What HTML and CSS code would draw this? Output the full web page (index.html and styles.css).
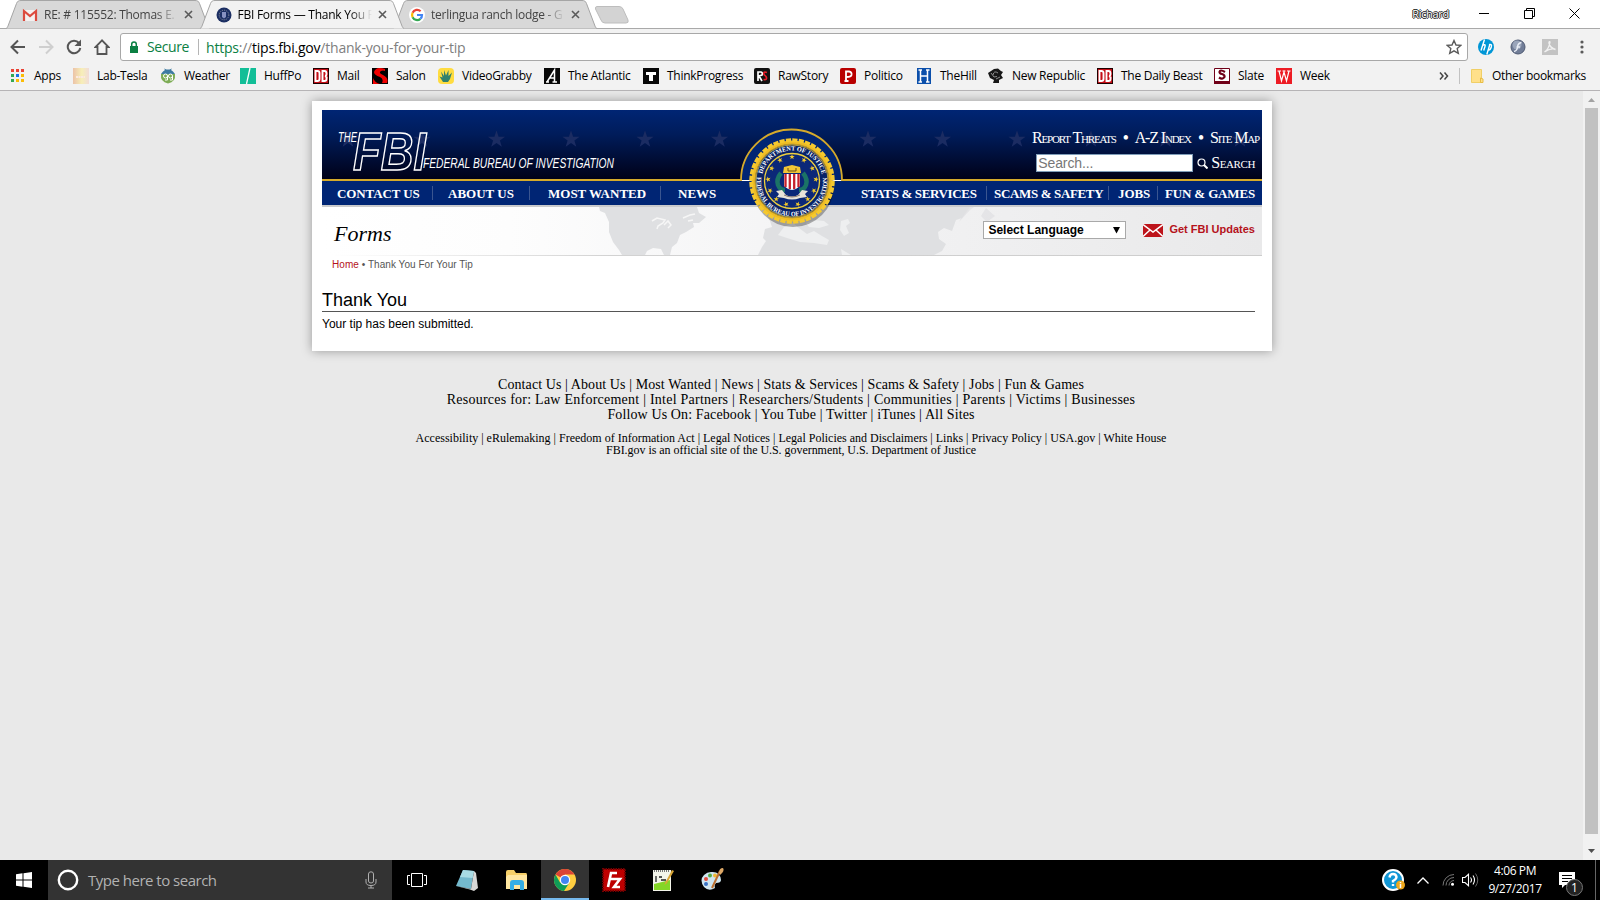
FILE: index.html
```html
<!DOCTYPE html>
<html lang="en">
<head>
    <meta charset="UTF-8">
    <title>FBI Forms — Thank You For Your Tip</title>
    <link rel="stylesheet" href="styles.css">
</head>
<body>
    <!-- shared shapes -->
    <svg class="defs" width="0" height="0">
        <defs>
            <path id="tab-shape" d="M0 28.500C1 28.300 1.500 27 2 26L10.500 3.500C11.500 1.200 12.500 .5 15 .5H189C191.500 .5 192.500 1.200 193.500 3.500L202 26C202.500 27 203 28.300 204 28.500"/>
            <path id="star" d="M0-9L2.100-2.800H8.600L3.400 1.100L5.300 7.300L0 3.500L-5.300 7.300L-3.400 1.100L-8.600-2.800H-2.100Z"/>
            <path id="cross" d="M1 1L8 8M8 1L1 8"/>
        </defs>
    </svg>

    <!-- Tab strip -->
    <div class="tab-strip">
        <div class="tab">
            <svg class="tab-bg" width="204" height="29"><use href="#tab-shape" fill="#d8d8d8" stroke="#a5a5a5"/></svg>
            <svg class="tab-icon" width="16" height="16"><path d="M1 3H15V14H1Z" fill="#f4f1f0"/><path d="M2 14V4L8 9L14 4V14" fill="none" stroke="#dc4b3e" stroke-width="2.200"/></svg>
            <span class="tab-title">RE: # 115552: Thomas E. C</span>
            <svg class="tab-close" width="9" height="9"><use href="#cross"/></svg>
        </div>
        <div class="tab active">
            <svg class="tab-bg" width="204" height="29"><use href="#tab-shape" fill="#f2f2f2" stroke="#a5a5a5"/></svg>
            <svg class="tab-icon" width="16" height="16"><circle cx="8" cy="8" r="7.500" fill="#1c2f63"/><circle cx="8" cy="8" r="4.800" fill="none" stroke="#8f93a0" stroke-width="1" stroke-dasharray="1 1"/><path d="M6 5H10V10L8 11.500L6 10Z" fill="#8892c0"/></svg>
            <span class="tab-title">FBI Forms — Thank You F</span>
            <svg class="tab-close" width="9" height="9"><use href="#cross"/></svg>
        </div>
        <div class="tab">
            <svg class="tab-bg" width="204" height="29"><use href="#tab-shape" fill="#d8d8d8" stroke="#a5a5a5"/></svg>
            <svg class="tab-icon" width="16" height="16"><circle cx="8" cy="8" r="8" fill="#fff"/><g fill="none" stroke-width="2.200"><path d="M11.600 4.200A5 5 0 0 0 3.600 5.800" stroke="#ea4335"/><path d="M3.600 5.800A5 5 0 0 0 3.600 10.200" stroke="#fbbc05"/><path d="M3.600 10.200A5 5 0 0 0 11.400 11.800" stroke="#34a853"/><path d="M11.400 11.800A5 5 0 0 0 13 8H8" stroke="#4285f4"/></g></svg>
            <span class="tab-title">terlingua ranch lodge - G</span>
            <svg class="tab-close" width="9" height="9"><use href="#cross"/></svg>
        </div>
        <svg class="new-tab" width="36" height="18"><path d="M3 .5H25Q28 .5 29 3L34 14Q35 17 32 17H11Q8 17 7 14L1.500 3Q1 .5 3 .5Z" fill="#d3d3d3" stroke="#bdbdbd"/></svg>
        <div class="window-buttons">
            <span class="profile">Richard</span>
            <svg width="11" height="11"><path d="M0 5.500H10" stroke="#000"/></svg>
            <svg width="11" height="11"><path d="M.5 2.500H8.500V10.500H.5ZM2.500 2.500V.5H10.500V8.500H8.500" fill="none" stroke="#000"/></svg>
            <svg width="11" height="11"><path d="M.5 .5L10.500 10.500M10.500 .5L.5 10.500" stroke="#000"/></svg>
        </div>
    </div>

    <!-- Toolbar -->
    <div class="toolbar">
        <svg width="16" height="16"><path d="M15 8H2M8 1.500L1.500 8L8 14.500" fill="none" stroke="#555" stroke-width="2"/></svg>
        <svg width="16" height="16"><path d="M1 8H14M8 1.500L14.500 8L8 14.500" fill="none" stroke="#cfcfcf" stroke-width="2"/></svg>
        <svg width="16" height="16"><path d="M13 4A6.300 6.300 0 1 0 14.300 9" fill="none" stroke="#555" stroke-width="2"/><path d="M15 .5V7H8.500Z" fill="#555"/></svg>
        <svg width="16" height="16"><path d="M8 1.300L1.500 8H3.500V15H12.500V8H14.500Z" fill="none" stroke="#555" stroke-width="1.800"/></svg>
        <div class="omnibox">
            <svg width="10" height="12"><path d="M1 5H9V12H1Z" fill="#0b8043"/><path d="M2.700 5V3.200A2.300 2.300 0 0 1 7.300 3.200V5" fill="none" stroke="#0b8043" stroke-width="1.500"/></svg>
            <span class="secure">Secure</span>
            <span class="url"><span class="green">https</span>://<span class="host">tips.fbi.gov</span>/thank-you-for-your-tip</span>
            <svg class="bookmark-star" width="16" height="16"><path d="M8 1.500L10 6L14.800 6.400L11.200 9.600L12.300 14.300L8 11.800L3.700 14.300L4.800 9.600L1.200 6.400L6 6Z" fill="none" stroke="#5a5a5a" stroke-width="1.400"/></svg>
        </div>
        <svg width="16" height="16"><circle cx="8" cy="8" r="8" fill="#0096d6"/><path d="M6.500 .5L3 11.500M4.300 6.500Q8 4.500 7 7.500L5.700 11.500M12 5L8.800 15.500M11 5.700Q14.300 4.500 13.300 8Q12.300 11.500 10 11" fill="none" stroke="#fff" stroke-width="1.400"/></svg>
        <svg width="16" height="16"><circle cx="8" cy="8" r="7" fill="#717d97" stroke="#4f5a73"/><circle cx="7" cy="6" r="4.500" fill="#9aa5ba"/><path d="M11.500 3.500Q8 4 7.500 8T4 12.500M6.500 8H10" fill="none" stroke="#e9edf5" stroke-width="1.500"/></svg>
        <svg width="16" height="16"><path d="M0 0H16V16H0Z" fill="#c3c3c3"/><path d="M2.500 13Q7 10 8 3Q7 2 7 4Q8 9 13.500 10.500Q9 8.500 2.500 13" fill="none" stroke="#f1f1f1" stroke-width="1.400"/></svg>
        <svg class="menu-dots" width="16" height="16"><circle cx="8" cy="3" r="1.600" fill="#5a5a5a"/><circle cx="8" cy="8" r="1.600" fill="#5a5a5a"/><circle cx="8" cy="13" r="1.600" fill="#5a5a5a"/></svg>
    </div>

    <!-- Bookmarks bar -->
    <div class="bookmarks">
        <a><svg width="16" height="16"><g fill="#ea4335"><path d="M1 1H4V4H1ZM6 1H9V4H6ZM11 1H14V4H11Z"/></g><path d="M1 6H4V9H1ZM1 11H4V14H1Z" fill="#34a853"/><path d="M6 6H9V9H6Z" fill="#1a73e8"/><path d="M11 6H14V9H11ZM6 11H9V14H6ZM11 11H14V14H11Z" fill="#fbbc05"/></svg>Apps</a>
        <a><svg width="16" height="16"><defs><linearGradient id="lab"><stop offset="0" stop-color="#ecc3a8"/><stop offset=".55" stop-color="#f7efb8"/><stop offset="1" stop-color="#f1dcd8"/></linearGradient></defs><path d="M0 0H16V16H0Z" fill="url(#lab)"/><path d="M3 9H12" stroke="#fbe9e0" stroke-width="2" stroke-dasharray="2 .5"/></svg>Lab-Tesla</a>
        <a><svg width="16" height="16"><path d="M1 6Q3 3 5 2L4 .5L6.500 1.500H9.500L12 .5L11 2Q13 3 15 6Z" fill="#3e7ba1"/><path d="M1 6H15Q16 14 8 15.500Q0 14 1 6Z" fill="#7dac55"/><g fill="none" stroke="#fff"><circle cx="5.500" cy="8" r="2"/><circle cx="10.500" cy="8" r="2"/><path d="M7.500 8V12H5M12.500 8V12H10"/></g></svg>Weather</a>
        <a><svg width="16" height="16"><path d="M0 0H16V16H0Z" fill="#12be97"/><path d="M10 0L6.500 16" stroke="#fff" stroke-width="1.300"/></svg>HuffPo</a>
        <a><svg width="16" height="16"><path d="M0 0H16V16H0Z" fill="#1d0000"/><path d="M1 1H15V15H1Z" fill="#c40d16"/><path d="M2.500 3H4.500Q6.500 3 6.500 5V11Q6.500 13 4.500 13H2.500ZM9.500 3H11.500Q13.500 3 13.500 5.500T12 8Q14 8.500 13.500 11Q13.500 13 11.500 13H9.500Z" fill="none" stroke="#fff" stroke-width="1.900"/></svg>Mail</a>
        <a><svg width="16" height="16"><path d="M0 0H16V16H0Z" fill="#000"/><path d="M13 1Q4-2 2 4Q2 7 8 9Q12 11 10 15H15Q17 10 11 7Q6 5 9 3Q11 2 13 3Z" fill="#f00000"/><path d="M1 10V16H8Q3 15 1 10" fill="#f00000"/></svg>Salon</a>
        <a><svg width="16" height="16"><rect width="16" height="16" rx="4" fill="#ffdc40"/><path d="M5 14L1.500 8.500L4.500 9.500L3 3.500L6 8L6 2L8 7.500L10.500 2L10.500 8L14 4.500L12 11L10 14Z" fill="#32816d"/></svg>VideoGrabby</a>
        <a><svg width="16" height="16"><path d="M0 0H16V16H0Z" fill="#080808"/><path d="M3 14L10.500 2V14M6 10H10.500M2 14H5M8.500 14H13" fill="none" stroke="#fff" stroke-width="1.500"/></svg>The Atlantic</a>
        <a><svg width="16" height="16"><path d="M0 0H16V16H0Z" fill="#080808"/><path d="M3 4H13V7H10V13H6V7H3Z" fill="#fff"/></svg>ThinkProgress</a>
        <a><svg width="16" height="16"><rect width="16" height="16" rx="2" fill="#111"/><path d="M4 13V4H7Q9 4.500 8 7L5 8L8 13" fill="none" stroke="#fff" stroke-width="1.700"/><path d="M13 4.500Q9 3 10 6.500L12 8.500Q14 12 9.500 11.500" fill="none" stroke="#e71c27" stroke-width="1.700"/></svg>RawStory</a>
        <a><svg width="16" height="16"><rect width="16" height="16" rx="2" fill="#b90000"/><path d="M6 13V3.500H9Q12 4 11.500 7Q11 9 6.500 9M4.500 13H8.500" fill="none" stroke="#fff" stroke-width="1.800"/></svg>Politico</a>
        <a><svg width="16" height="16"><path d="M1 0H15V16H1Z" fill="#0b4fab"/><path d="M4.500 2V14M11.500 2V14M4.500 8H11.500M2.500 2H6M10 2H13.500M2.500 14H6M10 14H13.500" stroke="#fff" stroke-width="1.500"/></svg>TheHill</a>
        <a><svg width="16" height="16"><path d="M3 3L6 1L10 .5L13 3L15 4L13 7L15 10L11 12L11 15H5L6 12L2 10L0 5Z" fill="#171717"/><path d="M5 7Q6 2 10 5M3 5L6 9L9 8.500M8 11L12 9" fill="none" stroke="#aaa" stroke-width=".8"/></svg>New Republic</a>
        <a><svg width="16" height="16"><path d="M0 0H16V16H0Z" fill="#1d0000"/><path d="M1 1H15V15H1Z" fill="#c40d16"/><path d="M2.500 3H4.500Q6.500 3 6.500 5V11Q6.500 13 4.500 13H2.500ZM9.500 3H11.500Q13.500 3 13.500 5.500T12 8Q14 8.500 13.500 11Q13.500 13 11.500 13H9.500Z" fill="none" stroke="#fff" stroke-width="1.900"/></svg>The Daily Beast</a>
        <a><svg width="16" height="16"><path d="M.5 .5H15.500V15.500H.5Z" fill="#fff" stroke="#700018"/><path d="M0 13H16V16H0Z" fill="#700018"/><path d="M11 4Q6 1 5.500 4Q5.500 5.500 8 6Q11 7 10.500 9Q8.500 12 5 9.500" fill="none" stroke="#700018" stroke-width="2.200"/></svg>Slate</a>
        <a><svg width="16" height="16"><path d="M0 0H16V16H0Z" fill="#ed1c24"/><path d="M3 3L5.500 13L8 4L10.500 13L13 3M1.500 3H5M6.500 3H9.500M11 3H14.500" fill="none" stroke="#fff" stroke-width="1.200"/></svg>Week</a>
        <svg class="more" width="10" height="8"><path d="M1 .5L4 4L1 7.500M5.500 .5L8.500 4L5.500 7.500" fill="none" stroke="#444" stroke-width="1.500"/></svg>
        <a class="other"><svg width="13" height="14"><path d="M.5 .5H10.500V13.500H.5Z" fill="#ffe08a" stroke="#f0cf66"/><path d="M9.500 9V13.500H12V10Z" fill="#ffe08a" stroke="#e8bd45"/></svg>Other bookmarks</a>
    </div>

    <!-- Page -->
    <div class="viewport">
        <div class="page">
            <div class="card">
                <div class="banner">
                    <svg class="banner-art" width="940" height="146">
                        <defs>
                            <linearGradient id="sky" x2="0" y2="1"><stop offset="0" stop-color="#002574"/><stop offset=".35" stop-color="#001c5a"/><stop offset="1" stop-color="#000016"/></linearGradient>
                            <linearGradient id="sub"><stop offset="0" stop-color="#fff"/><stop offset=".2" stop-color="#fdfdfd"/><stop offset=".5" stop-color="#f4f4f5"/><stop offset="1" stop-color="#e9e9ea"/></linearGradient>
                            <linearGradient id="rule" gradientUnits="userSpaceOnUse" x1="10" x2="940"><stop offset="0" stop-color="#fff"/><stop offset=".3" stop-color="#d2d2d2"/><stop offset="1" stop-color="#cdcdcd"/></linearGradient>
                        </defs>
                        <path d="M0 0H940V70H0Z" fill="url(#sky)"/>
                        <g fill="#1b2c62">
                            <use href="#star" x="26" y="29.500"/><use href="#star" x="100" y="29.500"/><use href="#star" x="174.500" y="29.500"/><use href="#star" x="249" y="29.500"/><use href="#star" x="323" y="29.500"/><use href="#star" x="397.500" y="29.500"/><use href="#star" x="546" y="29.500"/><use href="#star" x="620.500" y="29.500"/><use href="#star" x="695" y="29.500"/><use href="#star" x="769" y="29.500"/><use href="#star" x="843.500" y="29.500"/><use href="#star" x="918" y="29.500"/>
                        </g>
                        <path d="M0 71H940V95H0Z" fill="#002574"/>
                        <path d="M0 96H940" stroke="#c9cacc" stroke-width="2"/>
                        <path d="M0 97H940V145H0Z" fill="url(#sub)"/>
                        <!-- world map -->
                        <g fill="#dfe0e2">
                            <path d="M277 97H375L377 103L384 107L377 113L371 113L372 117L364 122L358 125L355 133L350 137L348 145H342L339 139L331 138L325 141L323 145H300L297 140L291 132L287 122V112L283 103L278 101Z"/>
                            <path d="M444 104L450 108L462 106L470 97H648L640 108L634 110L630 121L622 118L616 122L617 129L624 134L620 141L612 145H436L440 137L444 131L441 128L443 119L450 117L448 111Z"/>
                            <path d="M648 100L652 97H645L637 112ZM664 98L659 106L665 112L673 106Z" opacity=".7"/>
                        </g>
                        <g fill="#eeeff0">
                            <path d="M456 125L462 117L471 113L477 118L485 124L492 121L500 126L507 130L505 135L492 133L478 132L465 128Z"/>
                            <path d="M484 113L492 110L502 111L507 115L497 118L487 117ZM519 111L526 109L528 113L524 116L527 123L522 126L518 120ZM519 139L529 145H520Z"/>
                        </g>
                        <path d="M330 111L335 108L343 110L341 113L336 116L335 119M342 115L346 111L349 115L346 118M361 108L368 105L373 104M366 111L371 110" fill="none" stroke="#f6f6f6" stroke-width="1.500"/>
                        <path d="M10 145H940V146H10Z" fill="url(#rule)"/>
                        <path d="M0 70H419A50.500 50.500 0 0 1 520 70H940" fill="#002574"/>
                        <path d="M0 70H419A50.500 50.500 0 0 1 520 70H940" fill="none" stroke="#d5aa2b" stroke-width="1.800"/>
                        <g fill="#fff" font-family="Liberation Sans Narrow, Liberation Sans, sans-serif" font-style="italic">
                            <text x="16" y="32" font-size="15" textLength="19" lengthAdjust="spacingAndGlyphs">THE</text>
                            <text x="31" y="59.500" font-size="54" font-weight="bold" fill="none" stroke="#fff" stroke-width="1.500" textLength="73" lengthAdjust="spacingAndGlyphs">FBI</text>
                            <text x="101" y="58" font-size="15.500" textLength="191" lengthAdjust="spacingAndGlyphs">FEDERAL BUREAU OF INVESTIGATION</text>
                        </g>
                    </svg>
                    <div class="top-row">
                        <div class="top-links"><a>Report Threats</a><b>•</b><a>A-Z Index</a><b>•</b><a>Site Map</a></div>
                        <div class="search-row">
                            <input type="text" placeholder="Search...">
                            <svg width="11" height="11"><circle cx="4.500" cy="4.500" r="3.500" fill="none" stroke="#fff" stroke-width="1.200"/><path d="M7 7L10.500 10.500" stroke="#fff" stroke-width="2"/></svg>
                            <a>Search</a>
                        </div>
                    </div>
                    <div class="nav">
                        <a class="contact">CONTACT US</a><a class="about">ABOUT US</a><a class="wanted">MOST WANTED</a><a class="news">NEWS</a>
                        <a class="stats">STATS &amp; SERVICES</a><a class="scams">SCAMS &amp; SAFETY</a><a class="jobs">JOBS</a><a class="games">FUN &amp; GAMES</a>
                    </div>
                    <div class="section-row">
                        <span class="section-title">Forms</span>
                        <div class="language">Select Language<svg width="7" height="7"><path d="M0 0H7L3.500 6.500Z"/></svg></div>
                        <svg class="mail" width="20" height="13"><path d="M0 0H20V13H0Z" fill="#bd141b"/><path d="M0 .5L10 8L20 .5M0 12.500L7 6M20 12.500L13 6" fill="none" stroke="#fff" stroke-width="1.500"/></svg>
                        <a class="updates">Get FBI Updates</a>
                    </div>
                    <!-- Seal -->
                    <svg class="seal" width="100" height="100" viewBox="-50 -50 100 100">
                        <defs>
                            <path id="arc-top" d="M-30.500 0A30.500 30.500 0 0 1 30.500 0"/>
                            <path id="arc-bottom" d="M-34.800-6A35.300 35.300 0 1 0 34.800-6"/>
                        </defs>
                        <circle cx="1" cy="5" r="41" fill="#000" opacity=".3"/>
                        <circle r="40.500" fill="#eebc24"/>
                        <circle r="41" fill="none" stroke="#f5c92e" stroke-width="3.500" stroke-dasharray="5.200 1.240"/>
                        <circle r="37" fill="#082268" stroke="#c69c20" stroke-width="1"/>
                        <circle r="27.500" fill="#0b2878" stroke="#eed03e" stroke-width="1.300"/>
                        <circle r="36" fill="none" stroke="#eed03e" stroke-width=".7"/>
                        <g fill="#fff" font-family="Liberation Serif, serif" font-size="6.500" font-weight="bold">
                            <text><textPath href="#arc-top" startOffset="7" textLength="82" lengthAdjust="spacingAndGlyphs">DEPARTMENT OF JUSTICE</textPath></text>
                            <text><textPath href="#arc-bottom" startOffset="2" textLength="118" lengthAdjust="spacingAndGlyphs">FEDERAL BUREAU OF INVESTIGATION</textPath></text>
                        </g>
                        <g fill="#f5cb2b">
                            <g id="st"><use href="#star" transform="translate(0 -24) scale(.32)"/></g>
                            <use href="#st" transform="rotate(30)"/><use href="#st" transform="rotate(58)"/><use href="#st" transform="rotate(86)"/><use href="#st" transform="rotate(114)"/><use href="#st" transform="rotate(139)"/><use href="#st" transform="rotate(166)"/><use href="#st" transform="rotate(194)"/><use href="#st" transform="rotate(221)"/><use href="#st" transform="rotate(246)"/><use href="#st" transform="rotate(274)"/><use href="#st" transform="rotate(302)"/><use href="#st" transform="rotate(330)"/>
                        </g>
                        <path d="M-11-8Q-16-2-14 4Q-12 9-7 9M11-8Q16-2 14 4Q12 9 7 9" fill="none" stroke="#1b7466" stroke-width="4.500"/>
                        <path d="M-8-14L0-16L8-14L9-8H-9Z" fill="#f2c634"/>
                        <path d="M-4-13V-10H4V-13" fill="none" stroke="#69511b"/>
                        <path d="M-8-7H8V5Q5 8 0 9Q-5 8-8 5Z" fill="#fff"/>
                        <path d="M-6.500-7V6M-2.200-7V8M2.200-7V8M6.500-7V6" stroke="#c5202c" stroke-width="2.300"/>
                        <path d="M-16 10L-10 9L-6 14Q0 17 6 14L10 9L16 10L13 13L15 16L8 17Q0 20-8 17L-15 16L-13 13Z" fill="#e8e3d9"/>
                        <path d="M-8 14Q0 18 8 14" fill="none" stroke="#8d7b72"/>
                    </svg>
                </div>
                <div class="breadcrumb"><a>Home</a> • Thank You For Your Tip</div>
                <h1>Thank You</h1>
                <p class="message">Your tip has been submitted.</p>
            </div>

            <div class="footer">
                <p class="line1">Contact Us | About Us | Most Wanted | News | Stats &amp; Services | Scams &amp; Safety | Jobs | Fun &amp; Games</p>
                <p class="line2">Resources for: Law Enforcement | Intel Partners | Researchers/Students | Communities | Parents | Victims | Businesses</p>
                <p class="line3">Follow Us On: Facebook | You Tube | Twitter | iTunes | All Sites</p>
                <p class="small line4">Accessibility | eRulemaking | Freedom of Information Act | Legal Notices | Legal Policies and Disclaimers | Links | Privacy Policy | USA.gov | White House</p>
                <p class="small line5">FBI.gov is an official site of the U.S. government, U.S. Department of Justice</p>
            </div>
        </div>
        <div class="scrollbar">
            <svg width="7" height="4"><path d="M0 4L3.500 0L7 4Z" fill="#a3a3a3"/></svg>
            <div class="thumb"></div>
            <svg width="7" height="4"><path d="M0 0L3.500 4L7 0Z" fill="#505050"/></svg>
        </div>
    </div>

    <!-- Taskbar -->
    <div class="taskbar">
        <div class="start"><svg width="16" height="16"><path d="M0 2.300L6.500 1.300V7.500H0ZM7.500 1.200L16 0V7.500H7.500ZM0 8.500H6.500V14.700L0 13.700ZM7.500 8.500H16V16L7.500 14.800Z" fill="#fff"/></svg></div>
        <div class="search-box">
            <svg width="22" height="22"><circle cx="11" cy="11" r="9.200" fill="none" stroke="#fff" stroke-width="2.400"/></svg>
            <span>Type here to search</span>
            <svg width="12" height="18"><path d="M3.500 3Q3.500 .8 6 .8T8.500 3V10Q8.500 12 6 12T3.500 10ZM1 8V11Q1 14.500 6 14.500T11 11V8M6 14.500V17M3 17H9" fill="none" stroke="#b0b0b0"/></svg>
        </div>
        <div class="apps">
            <div><svg width="20" height="14"><path d="M4.500 .5H15.500V13.500H4.500ZM3 2.500H.5V11.500H3M17 2.500H19.500V11.500H17" fill="none" stroke="#fff"/></svg></div>
            <div><svg width="24" height="24"><path d="M8 2L19 3L16 21L1 18Z" fill="#74b9cd"/><path d="M8 2L19 3L17.500 10L5 9Z" fill="#a9dbe4"/><path d="M1 18L16 21L19 3L21 5L23 20L19 23L15 21.500Z" fill="#d8d8d6"/></svg></div>
            <div><svg width="24" height="22"><path d="M1 3Q1 1 3 1H9L11 4H21Q22 4 22 6V20H1Z" fill="#f6cf68"/><path d="M3 6H22V20H1V8Z" fill="#ffe6a0"/><path d="M5 21V14Q5 11 8 11H16Q19 11 19 14V21H15V16H9V21Z" fill="#35aee5"/></svg></div>
            <div class="current"><svg width="22" height="22"><circle cx="11" cy="11" r="11" fill="#ffcd40"/><path d="M11 11L1.500 5.500A11 11 0 0 1 20.500 5.500H11Z" fill="#db4437"/><path d="M1.500 5.500A11 11 0 0 0 10 22L15.500 13.500L6 13.500Z" fill="#0f9d58"/><circle cx="11" cy="11" r="5.200" fill="#fff"/><circle cx="11" cy="11" r="4" fill="#4285f4"/></svg></div>
            <div><svg width="24" height="24"><path d="M1 1H23V23H1Z" fill="#bd0000" stroke="#720000" stroke-width="2" stroke-dasharray="1.500 1"/><path d="M6 19L9 5H15M7.500 11H13M12 11H18L12 19H18" fill="none" stroke="#fff" stroke-width="2.600"/></svg></div>
            <div><svg width="24" height="24"><path d="M2 2H20V23H2Z" fill="#f4f5ea"/><path d="M3 16L19 12V22H3Z" fill="#84d626"/><path d="M3 3H19" stroke="#777" stroke-width="2" stroke-dasharray="1 1"/><path d="M5 8V14M8 9H11M10 12H15" stroke="#222" stroke-width="1.300"/><path d="M14 15L21 2L23 3L16 15L13.500 17Z" fill="#d9a636"/></svg></div>
            <div><svg width="24" height="24"><path d="M11 4Q20 3 21 12Q21 15 16 15Q14 17 15 20Q9 24 4 19Q-1 12 4 7Q7 4 11 4Z" fill="#cfe6f1"/><circle cx="6" cy="11" r="2" fill="#e04b3d"/><circle cx="10" cy="7.500" r="2" fill="#55aa46"/><circle cx="15" cy="7.500" r="2" fill="#f2b733"/><circle cx="6" cy="16" r="2" fill="#3872c5"/><path d="M20 3L12 20" stroke="#bc7031" stroke-width="2"/><path d="M19 5Q19 0 23 0Q25 3 20 7Z" fill="#dda867"/></svg></div>
        </div>
        <div class="tray">
            <svg width="24" height="22"><circle cx="11" cy="11" r="10" fill="#1196d5" stroke="#fff" stroke-width="2"/><path d="M7.500 8.500Q8 5 11 5T14.500 8Q14.500 10 11 12V13.500M11 15V17" fill="none" stroke="#fff" stroke-width="2.400"/><circle cx="18.500" cy="16" r="4.500" fill="#efa81b"/><path d="M18.500 13V14.200M18.500 15V19" stroke="#fff" stroke-width="1.500"/></svg>
            <svg width="12" height="7"><path d="M.5 6.500L6 1L11.500 6.500" fill="none" stroke="#fff" stroke-width="1.300"/></svg>
            <svg width="13" height="12"><g fill="none" stroke="#777"><path d="M1 11.500A11 11 0 0 1 12 .5M4 11.500A8 8 0 0 1 12 3.500M7 11.500A5 5 0 0 1 12 6.500"/></g><circle cx="10.500" cy="10.300" r="1.500" fill="#fff"/></svg>
            <svg width="17" height="14"><path d="M.5 4.500H3L6.500 1.300V12.700L3 9.500H.5ZM8.500 4.500Q10.500 7 8.500 9.500M11 2.500Q14 7 11 11.500" fill="none" stroke="#fff" stroke-width="1.100"/><path d="M13.500 .5Q18 7 13.500 13.500" fill="none" stroke="#666"/></svg>
            <div class="clock"><span>4:06 PM</span><span>9/27/2017</span></div>
            <div class="notify">
                <svg width="17" height="17"><path d="M0 0H16V13H6L3 16V13H0Z" fill="#fff"/><path d="M3 3.500H13M3 6.500H13M3 9.500H9" stroke="#000"/></svg>
                <span class="badge">1</span>
            </div>
        </div>
    </div>
</body>
</html>
```
FILE: styles.css
```css
* {
    box-sizing: border-box;
}

body {
    margin: 0;
    width: 1600px;
    height: 900px;
    overflow: hidden;
    background: #e9e9e9;
    font-family: "Open Sans", "Noto Sans", sans-serif;
    font-size: 12px;
    color: #000;
}

svg {
    display: block;
    flex: none;
}

.defs {
    position: absolute;
}

/* Tab strip */
.tab-strip {
    display: flex;
    height: 29px;
    padding-left: 6px;
    background: linear-gradient(#fff 28px, #a9a9a9 28px);
}

.tab {
    position: relative;
    display: flex;
    align-items: center;
    width: 204px;
    height: 29px;
    margin-right: -10.5px;
    padding: 0 0 0 16px;
    flex: none;
    color: #444;
}

.tab.active {
    z-index: 1;
    color: #000;
}

.tab-bg {
    position: absolute;
    left: 0;
    top: 0;
}

.tab-icon {
    position: relative;
}

.tab-title {
    position: relative;
    width: 135px;
    margin: 0 5px 0 6px;
    white-space: nowrap;
    letter-spacing: -0.25px;
    -webkit-mask-image: linear-gradient(90deg, #000 112px, transparent 134px);
}

.tab-close {
    position: relative;
    stroke: #5a5a5a;
    stroke-width: 1.6;
}

.new-tab {
    margin: 6px 0 0 7px;
}

.window-buttons {
    display: flex;
    align-items: center;
    gap: 34px;
    margin-left: auto;
    padding-right: 20px;
    height: 27px;
}

.profile {
    margin-right: -4px;
    font-size: 11px;
    letter-spacing: -0.3px;
    color: #fff;
    text-shadow: 1px 0 #222, -1px 0 #222, 0 1px #222, 0 -1px #222;
}

/* Toolbar */
.toolbar {
    display: flex;
    align-items: center;
    gap: 12px;
    height: 36px;
    padding: 0 10px;
    background: #f2f2f2;
}

.toolbar > svg:nth-last-child(-n+3) {
    margin-left: 4px;
}

.omnibox {
    display: flex;
    align-items: center;
    flex: 1;
    height: 28px;
    margin-left: -2px;
    margin-right: -2px;
    padding: 0 5px 0 8px;
    background: #fff;
    border: 1px solid #a8a8a8;
    border-radius: 3px;
    font-size: 14px;
    letter-spacing: -0.22px;
    color: #808080;
}

.secure {
    margin-left: 8px;
    padding-right: 9px;
    border-right: 1px solid #b5b5b5;
    letter-spacing: -0.4px;
    line-height: 16px;
    color: #0b8043;
}

.url {
    margin-left: 7px;
}

.green {
    color: #0b8043;
}

.host {
    color: #000;
}

.bookmark-star {
    margin-left: auto;
}

/* Bookmarks */
.bookmarks {
    display: grid;
    grid-template-columns: 63px 87px 80px 73px 59px 66px 106px 99px 111px 86px 76px 72px 109px 117px 62px 163px 20px 130px;
    align-items: center;
    height: 26px;
    padding: 0 0 4px 10px;
    background: #f2f2f2;
    border-bottom: 1px solid #b6b4b6;
    white-space: nowrap;
    letter-spacing: -0.27px;
}

.bookmarks a {
    display: flex;
    align-items: center;
    gap: 8px;
    height: 16px;
}

.bookmarks .other {
    padding-left: 11px;
    border-left: 1px solid #c2c2c2;
    letter-spacing: -0.3px;
}

/* Page */
.viewport {
    display: flex;
    height: 769px;
}

.page {
    flex: 1;
    padding-top: 10px;
    font-family: Arial, "Liberation Sans", sans-serif;
}

.card {
    width: 960px;
    height: 250px;
    margin: 0 auto 0 312px;
    padding: 9px 10px;
    background: #fff;
    box-shadow: 0 0 10px rgba(0, 0, 0, 0.35);
}

.banner {
    position: relative;
    height: 146px;
}

.banner-art {
    position: absolute;
    left: 0;
    top: 0;
}

.top-row {
    position: relative;
    display: flex;
    flex-direction: column;
    align-items: flex-end;
    height: 71px;
    padding-top: 19px;
    color: #fff;
    font-family: "Liberation Serif", serif;
    font-variant: small-caps;
}

.top-links {
    display: flex;
    height: 18px;
    margin-right: 3px;
    font-size: 16px;
    line-height: 18px;
    letter-spacing: -1.15px;
}

.top-links b {
    width: 19px;
    text-align: center;
}

.search-row {
    display: flex;
    align-items: center;
    height: 18px;
    margin: 7px 7px 0 0;
    font-size: 16px;
    letter-spacing: -0.4px;
}

.search-row input {
    width: 157px;
    height: 18px;
    padding: 0 1px;
    border: 1px solid #7f9db9;
    font: 14px "Liberation Sans", sans-serif;
    letter-spacing: -0.1px;
}

.search-row input::placeholder {
    color: #777;
}

.search-row svg {
    margin: 0 3px 0 4px;
}

.nav {
    position: relative;
    display: grid;
    grid-template-columns: 111px 97px 131px 183px 143px 122px 49px 100px;
    height: 24px;
    line-height: 25px;
    color: #fff;
    font-family: "Liberation Serif", serif;
    font-size: 13px;
    font-weight: bold;
    white-space: nowrap;
}

.nav a {
    background: linear-gradient(#3a5590, #3a5590) right 5px / 1px 14px no-repeat;
}

.contact {
    padding-left: 15px;
    letter-spacing: -0.1px;
}

.about {
    padding-left: 15px;
}

.wanted {
    padding-left: 18px;
}

.nav .news {
    padding-left: 17px;
    background: none;
}

.stats {
    padding-left: 17px;
    letter-spacing: -0.35px;
}

.scams {
    padding-left: 7px;
    letter-spacing: -0.35px;
}

.jobs {
    padding-left: 9px;
    letter-spacing: -0.1px;
}

.nav .games {
    padding-left: 7px;
    background: none;
    letter-spacing: -0.15px;
}

.section-row {
    position: relative;
    display: flex;
    height: 51px;
    padding: 16px 7px 0 12px;
}

.section-title {
    margin-right: auto;
    font: italic 22px/26px "Liberation Serif", serif;
}

.language {
    display: flex;
    align-items: center;
    justify-content: space-between;
    width: 143px;
    height: 18px;
    padding: 0 5px 0 4px;
    background: #fff;
    border: 1px solid #a9a9a9;
    font-size: 12px;
    font-weight: bold;
}

.mail {
    margin: 3px 6px 0 17px;
}

.updates {
    color: #b5121b;
    font-size: 11px;
    font-weight: bold;
    line-height: 16px;
}

.seal {
    position: absolute;
    left: 419.5px;
    top: 21px;
}

.breadcrumb {
    padding: 3px 0 0 10px;
    font-size: 10px;
    line-height: 12px;
    letter-spacing: 0.05px;
    color: #555;
}

.breadcrumb a {
    color: #b5121b;
}

h1 {
    width: 933px;
    height: 24px;
    margin: 17px 0 0;
    border-bottom: 1px solid #555;
    font-size: 18px;
    font-weight: normal;
    line-height: 24px;
}

.message {
    margin: 5px 0;
    font-size: 12px;
    line-height: 14px;
}

/* Footer */
.footer {
    width: 960px;
    margin: 26px 0 0 311px;
    font-family: Georgia, "Liberation Serif", serif;
    font-size: 14px;
    line-height: 15px;
    text-align: center;
    white-space: nowrap;
}

.footer p {
    margin: 0;
}

.footer .line1 {
    letter-spacing: 0.09px;
}

.footer .line2 {
    letter-spacing: 0.24px;
}

.footer .line3 {
    letter-spacing: 0.12px;
}

.footer .small {
    font-size: 12px;
    line-height: 12px;
}

.footer .line4 {
    margin-top: 10px;
}

.footer .line5 {
    letter-spacing: -0.04px;
}

/* Scrollbar */
.scrollbar {
    display: flex;
    flex-direction: column;
    align-items: center;
    width: 17px;
    padding: 7px 0;
    background: #f1f1f1;
}

.thumb {
    width: 13px;
    height: 726px;
    margin: 6px 0 auto;
    background: #c1c1c1;
}

/* Taskbar */
.taskbar {
    display: flex;
    height: 40px;
    background: #000;
    color: #fff;
}

.start {
    display: flex;
    align-items: center;
    width: 48px;
    padding-left: 16px;
}

.search-box {
    display: flex;
    align-items: center;
    width: 344px;
    padding: 0 15px 0 9px;
    background: #333;
    color: #b2b2b2;
    font-size: 15px;
    letter-spacing: -0.5px;
}

.search-box span {
    flex: 1;
    margin-left: 9px;
}

.apps {
    display: flex;
}

.apps div {
    display: flex;
    align-items: center;
    justify-content: center;
    width: 49px;
}

.apps div:nth-child(2) {
    width: 51px;
}

.apps .current {
    width: 48px;
    background: #333;
    box-shadow: inset 0 -2px #76b9ed;
}

.tray {
    display: flex;
    align-items: center;
    margin-left: auto;
    padding-right: 4px;
}

.tray > svg:nth-child(2) {
    margin: 0 13px 0 11px;
}

.tray > svg:nth-child(4) {
    margin-left: 7px;
}

.clock {
    display: flex;
    flex-direction: column;
    width: 62px;
    margin-left: 5px;
    font-size: 12px;
    line-height: 18px;
    text-align: center;
    letter-spacing: -0.4px;
}

.notify {
    position: relative;
    width: 50px;
    height: 40px;
    padding: 12px 0 0 13px;
    border-right: 1px solid #666;
}

.badge {
    position: absolute;
    left: 20px;
    top: 19px;
    width: 17px;
    height: 17px;
    border: 1px solid #777;
    border-radius: 50%;
    background: #222;
    line-height: 15px;
    text-align: center;
}
```
